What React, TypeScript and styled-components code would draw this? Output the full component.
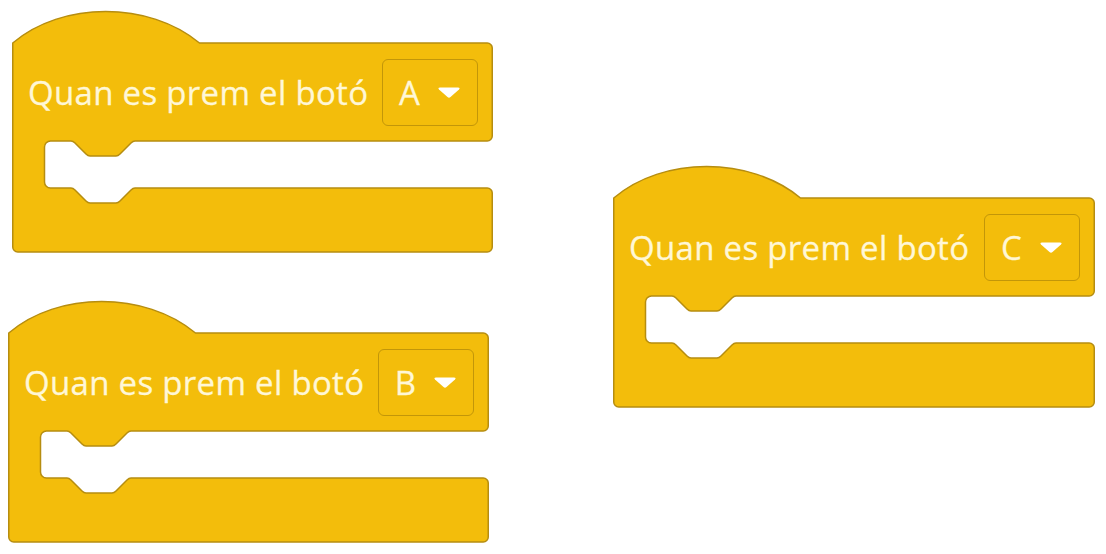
import React from "react";
import styled, { createGlobalStyle } from "styled-components";

const Global = createGlobalStyle`
  html, body { margin: 0; padding: 0; background: #ffffff; }
  body { font-family: "Open Sans", "Liberation Sans", sans-serif; }
`;

const FILL = "#F3BD0B";
const STROKE = "#B68D10";
const TEXT = "#FFF7D6";

const HAT = 32;
const HEAD = 98;
const MOUTH = 47;
const ARM = 64;

const Canvas = styled.div`
  position: relative;
  width: 1106px;
  height: 554px;
  overflow: hidden;
  background: #ffffff;
`;

const Block = styled.div<{ $x: number; $y: number; $w: number }>`
  position: absolute;
  left: ${(p) => p.$x}px;
  top: ${(p) => p.$y}px;
  width: ${(p) => p.$w}px;
  display: flex;
  flex-direction: column;
`;

const Shape = styled.svg`
  position: absolute;
  left: 0;
  top: 0;
  z-index: 0;
  overflow: visible;
`;

const Head = styled.div`
  position: relative;
  z-index: 1;
  margin-top: ${HAT}px;
  height: ${HEAD}px;
  display: flex;
  align-items: center;
  padding-left: 16px;
  padding-right: 15px;
  justify-content: space-between;
  box-sizing: border-box;
`;

const Label = styled.span`
  font-family: "Open Sans", "Liberation Sans", sans-serif;
  font-size: 33px;
  color: ${TEXT};
  white-space: nowrap;
  letter-spacing: 0.3px;
  -webkit-text-stroke: 0.3px ${TEXT};
`;

const Dropdown = styled.div`
  height: 67px;
  box-sizing: border-box;
  border: 1.5px solid #C29609;
  border-radius: 6px;
  display: flex;
  align-items: center;
  padding: 0 16px 0 16px;
  gap: 17px;
`;

const Letter = styled.span`
  font-family: "Open Sans", "Liberation Sans", sans-serif;
  font-size: 33px;
  color: ${TEXT};
  min-width: 21px;
  text-align: center;
  -webkit-text-stroke: 0.3px ${TEXT};
`;

const Spacer = styled.div<{ $h: number }>`
  height: ${(p) => p.$h}px;
`;

function shapePath(w: number) {
  const top = HAT;
  const hb = HAT + HEAD; // head bottom
  const mb = hb + MOUTH; // mouth bottom
  const bb = mb + ARM; // block bottom
  const R = w - 0.75;
  const L = 0.75;
  return [
    `M ${L} ${top}`,
    `C 50 ${top - 42} 137 ${top - 42} 187.5 ${top}`,
    `H ${R - 5}`,
    `A 5 5 0 0 1 ${R} ${top + 5}`,
    `V ${hb - 5}`,
    `A 5 5 0 0 1 ${R - 5} ${hb}`,
    `H 123`,
    `Q 121 ${hb} 119 ${hb + 2}`,
    `L 108 ${hb + 13}`,
    `Q 106 ${hb + 15} 104 ${hb + 15}`,
    `H 78`,
    `Q 76 ${hb + 15} 74 ${hb + 13}`,
    `L 63 ${hb + 2}`,
    `Q 61 ${hb} 59 ${hb}`,
    `H 38.5`,
    `A 6 6 0 0 0 32.5 ${hb + 6}`,
    `V ${mb - 6}`,
    `A 6 6 0 0 0 38.5 ${mb}`,
    `H 59`,
    `Q 61 ${mb} 63 ${mb + 2}`,
    `L 74 ${mb + 13}`,
    `Q 76 ${mb + 15} 78 ${mb + 15}`,
    `H 104`,
    `Q 106 ${mb + 15} 108 ${mb + 13}`,
    `L 119 ${mb + 2}`,
    `Q 121 ${mb} 123 ${mb}`,
    `H ${R - 5}`,
    `A 5 5 0 0 1 ${R} ${mb + 5}`,
    `V ${bb - 5}`,
    `A 5 5 0 0 1 ${R - 5} ${bb}`,
    `H ${L + 5}`,
    `A 5 5 0 0 1 ${L} ${bb - 5}`,
    `Z`,
  ].join(" ");
}

function Caret() {
  return (
    <svg width="24" height="13" viewBox="0 0 24 13">
      <path
        d="M 3 1.5 H 21 Q 23.5 1.5 22 3.5 L 13.5 11 Q 12 12.3 10.5 11 L 2 3.5 Q 0.5 1.5 3 1.5 Z"
        fill="#ffffff"
      />
    </svg>
  );
}

function HatBlock({ x, y, w, letter }: { x: number; y: number; w: number; letter: string }) {
  const total = HAT + HEAD + MOUTH + ARM;
  return (
    <Block $x={x} $y={y} $w={w}>
      <Shape width={w} height={total + 1} viewBox={`0 0 ${w} ${total + 1}`}>
        <path d={shapePath(w)} fill={FILL} stroke={STROKE} strokeWidth={1.5} strokeLinejoin="round" />
      </Shape>
      <Head>
        <Label>Quan es prem el botó</Label>
        <Dropdown>
          <Letter>{letter}</Letter>
          <Caret />
        </Dropdown>
      </Head>
      <Spacer $h={MOUTH} />
      <Spacer $h={ARM} />
    </Block>
  );
}

export default function App() {
  return (
    <>
      <Global />
      <Canvas>
        <HatBlock x={12} y={11} w={481} letter="A" />
        <HatBlock x={8} y={301} w={481} letter="B" />
        <HatBlock x={613} y={166} w={482} letter="C" />
      </Canvas>
    </>
  );
}
